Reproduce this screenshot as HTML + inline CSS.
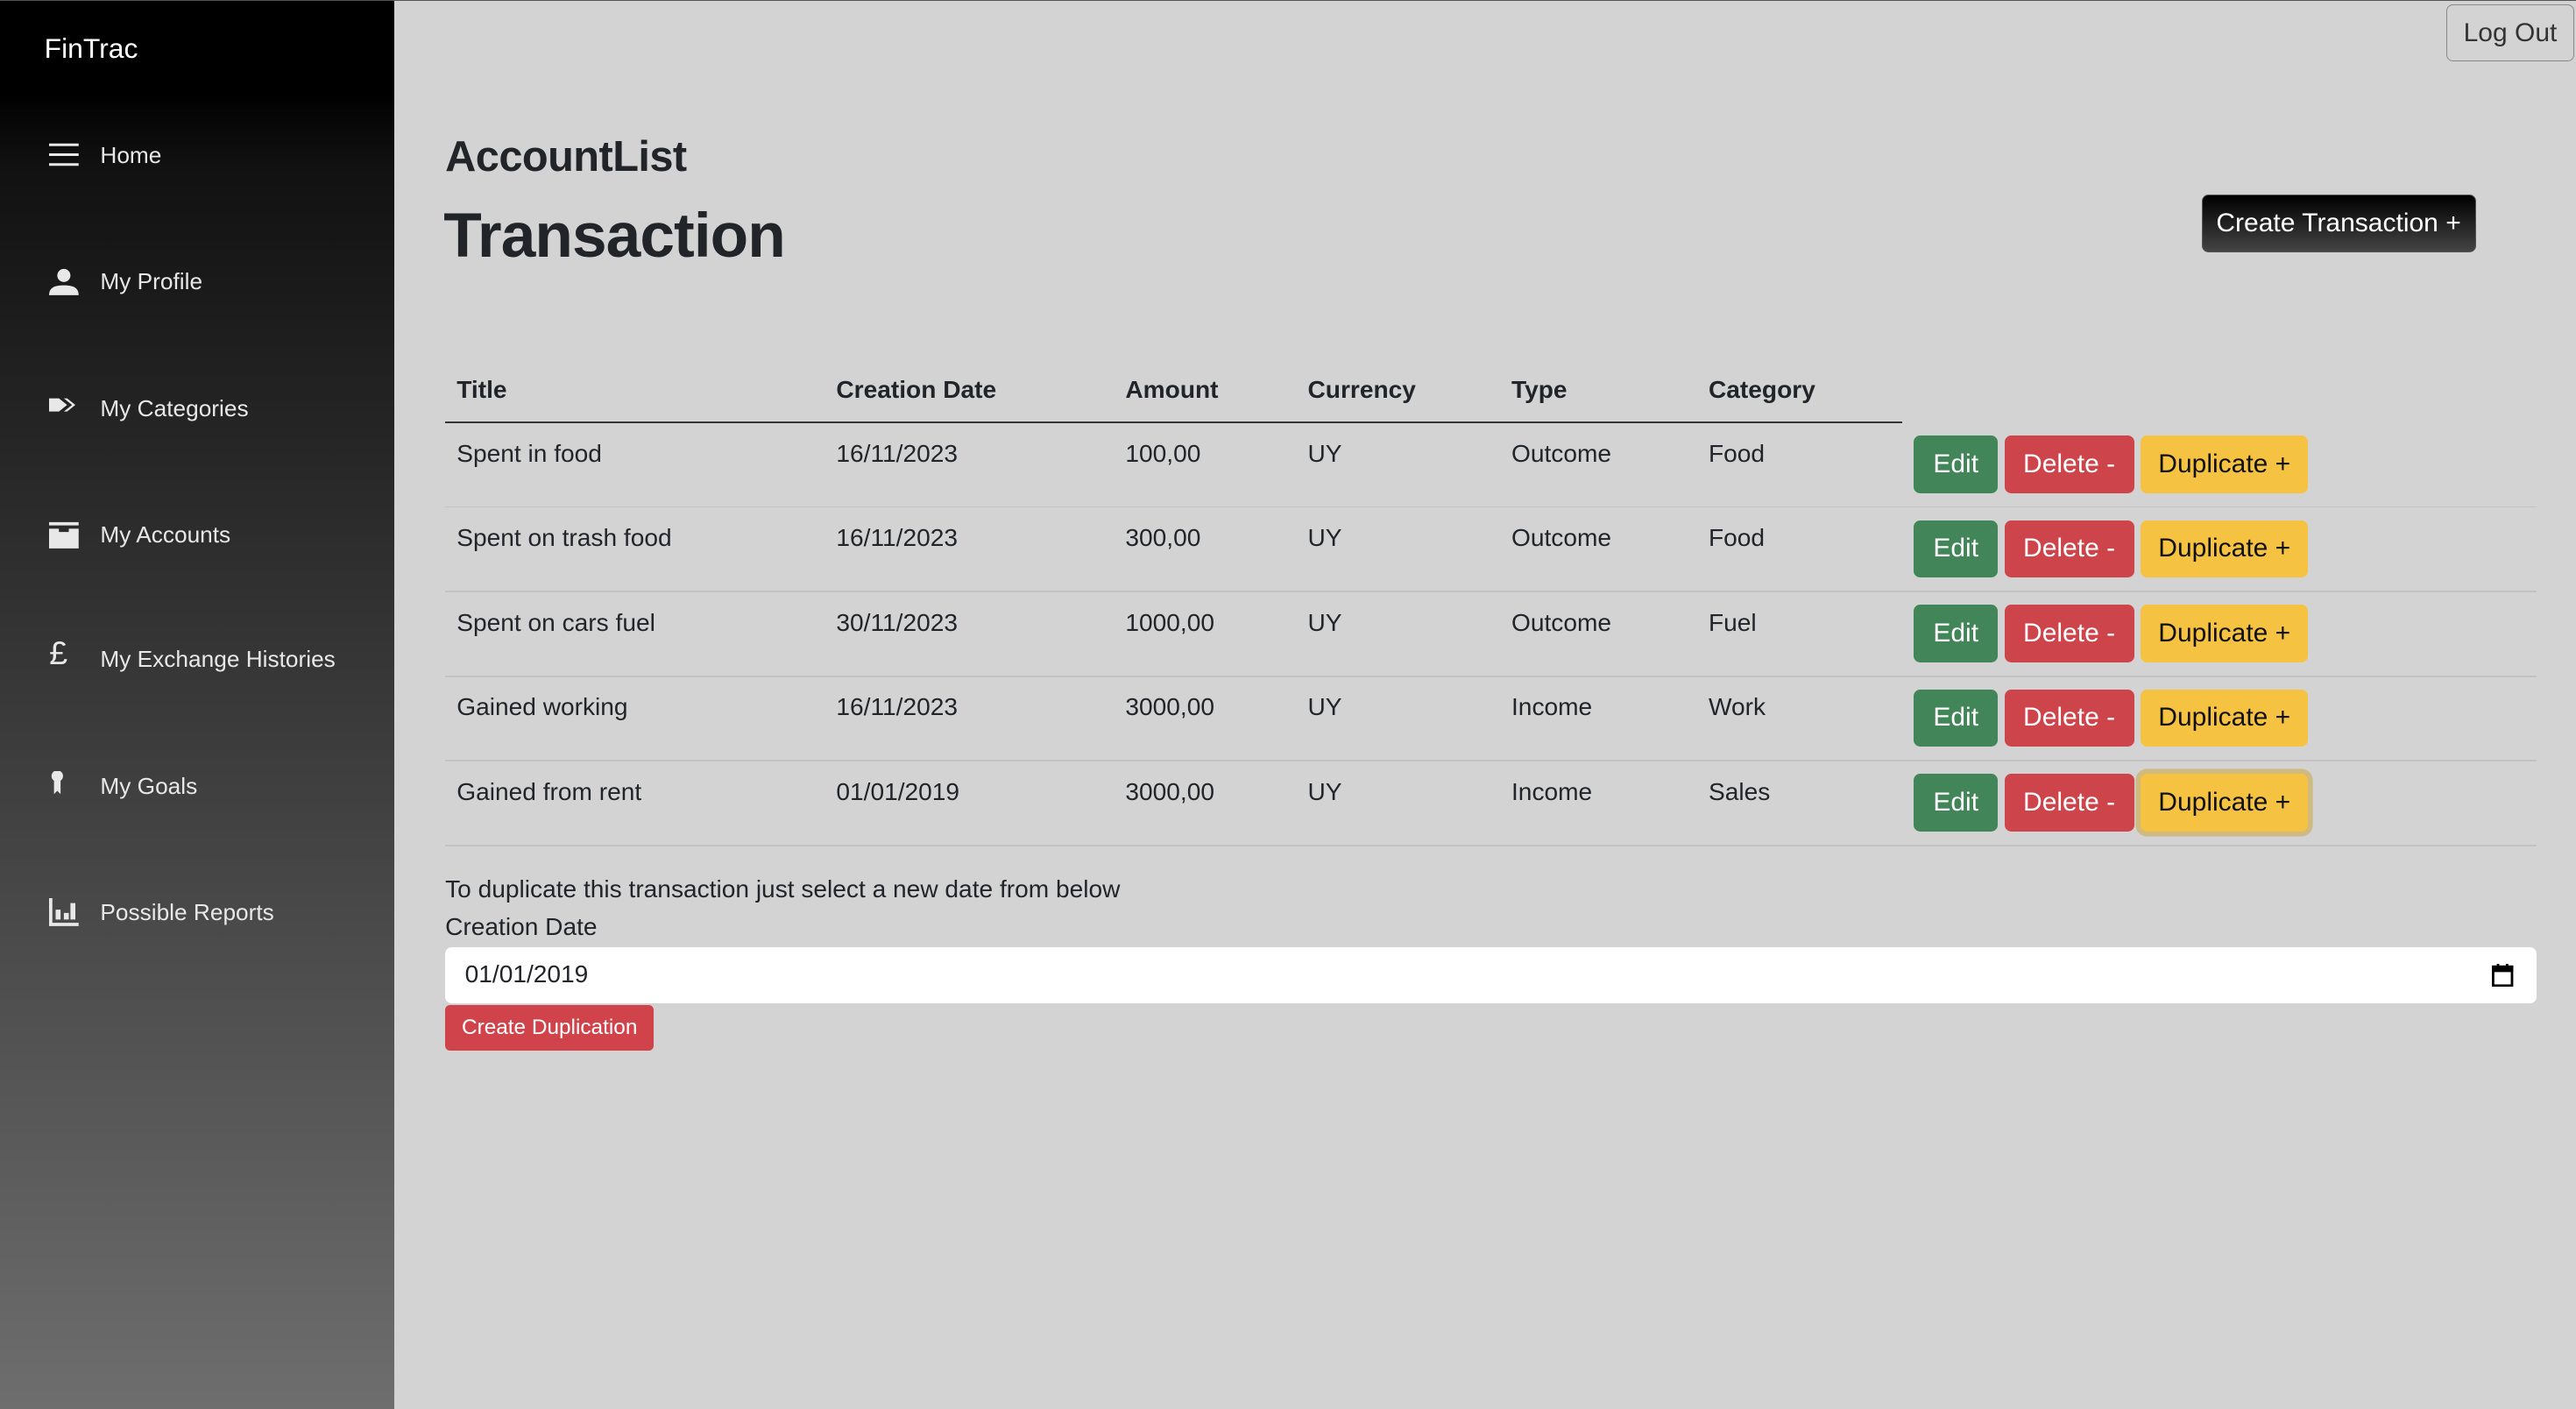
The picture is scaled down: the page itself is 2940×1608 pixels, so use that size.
<!DOCTYPE html>
<html><head><meta charset="utf-8"><style>
*{box-sizing:border-box;margin:0;padding:0}
html,body{width:2940px;height:1608px;overflow:hidden;background:#d3d3d3}
#root{zoom:1.875;width:1568px;height:858px;position:relative;font-family:"Liberation Sans",Arial,sans-serif;color:#212529;border-top:1px solid #555}
.side{position:absolute;left:0;top:0;width:240px;height:858px;background:linear-gradient(#000 0,#000 55px,#111 100px,#6e6e6e 858px)}
.brand{position:absolute;left:27px;top:19px;color:#fff;font-size:17px}
.nav{position:absolute;left:30px;color:#e8e8e8;font-size:14px;height:20px;display:flex;align-items:center}
.nav svg{width:18px;height:18px;margin-right:13px;fill:#e8e8e8}
.abs{position:absolute}
.btn{position:absolute;border-radius:4px;font-size:16px;display:flex;align-items:center;justify-content:center}
.th{position:absolute;top:228px;font-weight:bold;font-size:15px}
.td{position:absolute;font-size:15px}
.sep{position:absolute;left:271px;width:1273px;height:1px;background:#c2c2c2}
</style></head><body><div id="root">
<div class="side">
<div class="brand">FinTrac</div>
<div class="nav" style="top:84px"><svg viewBox="0 0 18 18"><rect x="0" y="2" width="18" height="1.6"/><rect x="0" y="8" width="18" height="1.6"/><rect x="0" y="14" width="18" height="1.6"/></svg>Home</div>
<div class="nav" style="top:161px"><svg viewBox="0 0 18 18"><circle cx="9" cy="5" r="4"/><path d="M0 17c0-5 4-6 9-6s9 1 9 6z"/></svg>My Profile</div>
<div class="nav" style="top:238px"><svg viewBox="0 0 18 18"><path d="M0 3h6l5 4-5 4H0z"/><path d="M9 3h2l5 4-5 4H9l5-4z"/></svg>My Categories</div>
<div class="nav" style="top:315px"><svg viewBox="0 0 18 18"><rect x="0" y="1" width="18" height="2"/><path d="M0 5h6v2h6V5h6v12H0z"/></svg>My Accounts</div>
<div class="nav" style="top:391px"><span style="font-size:20px;width:18px;margin-right:13px;margin-top:-8px">£</span>My Exchange Histories</div>
<div class="nav" style="top:468px"><svg viewBox="0 0 18 18"><circle cx="5" cy="3" r="3.5"/><path d="M3 6h4v8l-2-2-2 2z"/></svg>My Goals</div>
<div class="nav" style="top:545px"><svg viewBox="0 0 18 18"><path d="M0 0h2v15h16v2H0z"/><rect x="4" y="7" width="3" height="6"/><rect x="9" y="9" width="3" height="4"/><rect x="13" y="3" width="3" height="10"/></svg>Possible Reports</div>
</div>
<div class="btn" style="left:1489px;top:2px;width:78px;height:35px;border:1px solid #888;font-size:16px;color:#333">Log Out</div>
<div class="abs" style="left:271px;top:80px;font-size:26px;font-weight:bold;letter-spacing:-0.3px">AccountList</div>
<div class="abs" style="left:270px;top:121px;font-size:38px;font-weight:bold;letter-spacing:-0.5px">Transaction</div>
<div class="btn" style="left:1340px;top:118px;width:167px;height:35px;background:linear-gradient(#000,#444);color:#fff;border:1px solid #555">Create Transaction +</div>
<div class="th" style="left:278px">Title</div>
<div class="th" style="left:509px">Creation Date</div>
<div class="th" style="left:685px">Amount</div>
<div class="th" style="left:796px">Currency</div>
<div class="th" style="left:920px">Type</div>
<div class="th" style="left:1040px">Category</div>
<div class="abs" style="left:271px;top:256px;width:887px;height:1px;background:#333"></div>
<div id="rows"></div>
<div class="td" style="left:271px;top:532px">To duplicate this transaction just select a new date from below</div>
<div class="td" style="left:271px;top:555px">Creation Date</div>
<div class="abs" style="left:271px;top:576px;width:1273px;height:34px;background:#fff;border-radius:4px;font-size:15px;padding:8px 12px">01/01/2019
<svg style="position:absolute;right:14px;top:10px" width="13" height="14" viewBox="0 0 13 14"><rect x="0.75" y="1.75" width="11.5" height="11.5" fill="none" stroke="#000" stroke-width="1.5"/><rect x="0" y="1" width="13" height="4"/><rect x="3" y="0" width="1.5" height="3"/><rect x="8.5" y="0" width="1.5" height="3"/></svg></div>
<div class="btn" style="left:271px;top:611px;width:127px;height:28px;background:#d1434b;color:#fff;font-size:13px;border-radius:3px">Create Duplication</div>
<script>
var d=[["Spent in food","16/11/2023","100,00","UY","Outcome","Food"],["Spent on trash food","16/11/2023","300,00","UY","Outcome","Food"],["Spent on cars fuel","30/11/2023","1000,00","UY","Outcome","Fuel"],["Gained working","16/11/2023","3000,00","UY","Income","Work"],["Gained from rent","01/01/2019","3000,00","UY","Income","Sales"]];
var xs=[278,509,685,796,920,1040],h="";
d.forEach(function(r,i){var y=257+i*51.5;
r.forEach(function(t,j){h+='<div class="td" style="left:'+xs[j]+'px;top:'+(y+10)+'px">'+t+'</div>';});
var by=y+7.5;
h+='<div class="btn" style="left:1165px;top:'+by+'px;width:51px;height:35px;background:#418558;color:#fff">Edit</div>';
h+='<div class="btn" style="left:1220px;top:'+by+'px;width:79px;height:35px;background:#cd444b;color:#fff">Delete -</div>';
h+='<div class="btn" style="left:1303px;top:'+by+'px;width:102px;height:35px;background:#f5c242;color:#111'+(i==4?';box-shadow:0 0 0 3px #cfba82':'')+'">Duplicate +</div>';
h+='<div class="sep" style="top:'+(y+50.5)+'px"></div>';});
document.getElementById('rows').innerHTML=h;
</script>
</div></body></html>
